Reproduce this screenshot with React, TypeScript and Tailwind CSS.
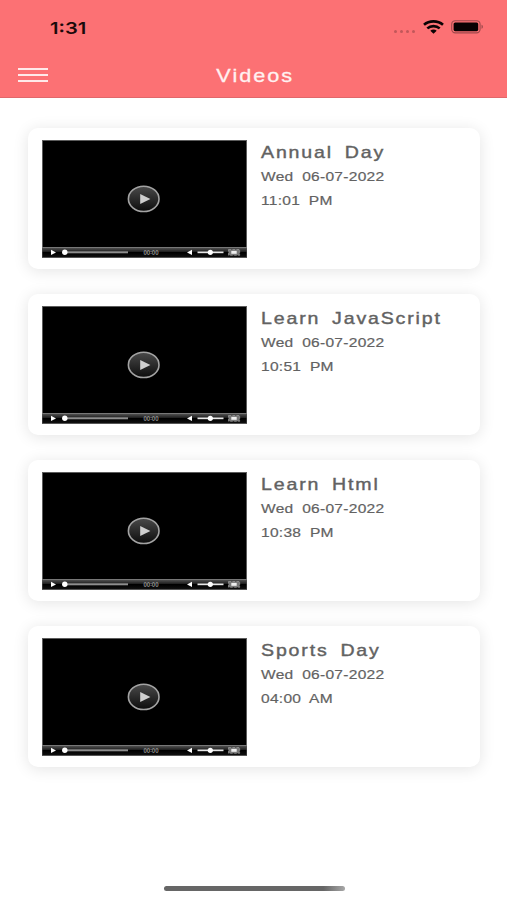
interface Video {
  title: string;
  date: string;
  time: string;
}

const videos: Video[] = [
  { title: "Annual Day", date: "Wed 06-07-2022", time: "11:01 PM" },
  { title: "Learn JavaScript", date: "Wed 06-07-2022", time: "10:51 PM" },
  { title: "Learn Html", date: "Wed 06-07-2022", time: "10:38 PM" },
  { title: "Sports Day", date: "Wed 06-07-2022", time: "04:00 AM" },
];

function WifiIcon() {
  return (
    <svg width="21" height="14" viewBox="0 0 21 14" fill="none" stroke="#0a0304" strokeWidth="2.6">
      <path d="M1 4.8C6.2 0.2 14.8 0.2 20 4.8" />
      <path d="M4.3 8.4C7.8 5.3 13.2 5.3 16.7 8.4" />
      <path d="M7.3 10.8C9.2 9.2 11.8 9.2 13.7 10.8L10.5 13.7Z" fill="#0a0304" stroke="none" />
    </svg>
  );
}

function BatteryIcon() {
  return (
    <svg width="33" height="14" viewBox="0 0 33 14" fill="none">
      <rect x="0.7" y="0.7" width="28.4" height="12.2" rx="3.6" stroke="#a04a4c" strokeWidth="1.1" />
      <rect x="2.6" y="2.4" width="24.6" height="8.8" rx="1.6" fill="#080203" />
      <path d="M30.5 4.8C32.4 5.3 32.4 8.3 30.5 8.8Z" fill="#a04a4c" />
    </svg>
  );
}

function StatusBar() {
  return (
    <div className="flex h-[54px] items-center justify-between pl-[50px] pr-[23px]">
      <span className="mt-[2px] origin-left scale-x-[1.22] text-[16.5px] font-semibold text-[#1c0a0b]">1:31</span>
      <div className="flex items-center">
        <div className="mr-2 mt-[9px] flex gap-[3px]">
          {[0, 1, 2, 3].map((dot) => (
            <span key={dot} className="h-[3px] w-[3px] rounded-full bg-[#c2575a]" />
          ))}
        </div>
        <WifiIcon />
        <div className="ml-[7px]">
          <BatteryIcon />
        </div>
      </div>
    </div>
  );
}

function Header() {
  return (
    <header className="h-[98px] border-b border-[#e0686b] bg-[#fc7174]">
      <StatusBar />
      <div className="grid h-[42px] grid-cols-[1fr_auto_1fr] items-center px-[18px]">
        <button aria-label="Menu" className="flex w-[30px] flex-col gap-1">
          <span className="h-[2px] bg-[#ffe9e9]" />
          <span className="h-[2px] bg-[#ffe9e9]" />
          <span className="h-[2px] bg-[#ffe9e9]" />
        </button>
        <h1 className="ml-[3px] mt-[2px] scale-x-[1.17] font-['Liberation_Sans',sans-serif] text-[18.5px] tracking-[1.7px] text-[#fff1f1] [-webkit-text-stroke:0.3px_#fff1f1]">
          Videos
        </h1>
      </div>
    </header>
  );
}

function PlayerThumbnail() {
  return (
    <svg width="205" height="118" viewBox="0 0 205 118" className="block shrink-0">
      <defs>
        <linearGradient id="bar" x1="0" y1="0" x2="0" y2="1">
          <stop offset="0" stopColor="#555" />
          <stop offset="0.45" stopColor="#1c1c1c" />
          <stop offset="0.5" stopColor="#000" />
          <stop offset="1" stopColor="#111" />
        </linearGradient>
        <linearGradient id="disc" x1="0" y1="0" x2="0" y2="1">
          <stop offset="0" stopColor="#4a4a4a" />
          <stop offset="1" stopColor="#0c0c0c" />
        </linearGradient>
      </defs>
      <rect width="205" height="118" fill="#000" />
      <rect x="0.5" y="0.5" width="204" height="117" fill="none" stroke="#5c5c5c" />
      <ellipse cx="101.7" cy="58.9" rx="15.3" ry="12.6" fill="url(#disc)" stroke="#a3a3a3" strokeWidth="1.6" />
      <path d="M98.2 54L108.4 59L98.2 64Z" fill="#cfcfcf" />
      <rect x="0.5" y="107.5" width="204" height="10" fill="url(#bar)" />
      <rect x="0" y="107" width="205" height="1" fill="#777" />
      <rect x="0" y="117" width="205" height="1" fill="#555" />
      <path d="M9 109.8L14 112.4L9 115Z" fill="#fff" />
      <rect x="22" y="111.3" width="64" height="2" fill="#8e8e8e" />
      <circle cx="22.8" cy="112.3" r="2.7" fill="#fff" />
      <text x="101.5" y="114.6" fontSize="6" fontWeight="700" textLength="15" lengthAdjust="spacingAndGlyphs" fill="#999">
        00:00
      </text>
      <path d="M150 109.8V115L145 112.4Z" fill="#fff" />
      <rect x="155.5" y="111.5" width="26" height="1.7" fill="#e8e8e8" />
      <circle cx="168.3" cy="112.3" r="2.6" fill="#fff" />
      <rect x="186.5" y="109.5" width="11.2" height="5.8" fill="#777" stroke="#aaa" strokeWidth="0.6" strokeDasharray="2.5 1.5" />
      <rect x="189.3" y="110.9" width="5.4" height="2.9" fill="#eee" />
    </svg>
  );
}

function VideoCard({ title, date, time }: Video) {
  return (
    <article className="flex h-[141px] gap-[14px] rounded-[10px] bg-white pl-[14px] pt-3 shadow-[0_2px_16px_rgba(0,0,0,0.11)]">
      <PlayerThumbnail />
      <div className="flex origin-left scale-x-[1.15] flex-col items-start whitespace-nowrap pt-px font-['Liberation_Sans',sans-serif] text-[#626262]">
        <h2 className="h-6 text-[17px] leading-6 tracking-[1.6px] [word-spacing:4px] [-webkit-text-stroke:0.4px_#626262]">
          {title}
        </h2>
        <p className="h-6 text-[13.5px] leading-6 tracking-[0.25px] [word-spacing:3.5px] [-webkit-text-stroke:0.2px_#626262]">{date}</p>
        <p className="h-6 text-[13.5px] leading-6 tracking-[0.25px] [word-spacing:3.5px] [-webkit-text-stroke:0.2px_#626262]">{time}</p>
      </div>
    </article>
  );
}

export default function App() {
  return (
    <div className="flex h-[900px] w-[507px] flex-col overflow-hidden bg-white font-['Inter',sans-serif]">
      <Header />
      <main className="flex flex-1 flex-col gap-[25px] pr-[27px] pl-7 pt-[30px]">
        {videos.map((video) => (
          <VideoCard key={video.title} {...video} />
        ))}
      </main>
      <div className="mx-auto mb-[9px] h-[5px] w-[181px] shrink-0 translate-x-px rounded-full bg-linear-to-r from-[#666] from-88% to-[#a8a8a8]" />
    </div>
  );
}
